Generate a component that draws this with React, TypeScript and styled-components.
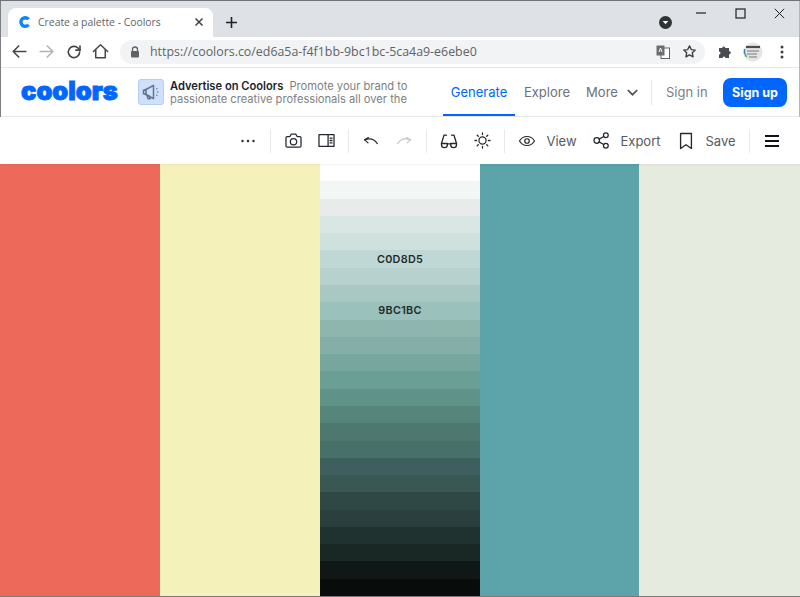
import React from "react";
import styled, { createGlobalStyle } from "styled-components";

const Global = createGlobalStyle`
  html, body { margin: 0; padding: 0; background: #fff; }
  * { box-sizing: border-box; }
`;

const Window = styled.div`
  width: 800px;
  height: 597px;
  display: flex;
  flex-direction: column;
  overflow: hidden;
  border-top: 1px solid #6f7276;
  border-bottom: 1px solid #77797a;
  font-family: Inter, "Noto Sans", sans-serif;
`;

const Framed = styled.div`
  border-left: 1px solid #7d7f82;
  border-right: 1px solid #b5b6b8;
  flex: none;
`;

const TabStrip = styled.div`
  height: 36px;
  background: #dee1e6;
  display: flex;
  align-items: flex-end;
  padding-left: 7px;
`;

const Tab = styled.div`
  width: 205px;
  height: 29px;
  background: #fff;
  border-radius: 8px 8px 0 0;
  display: flex;
  align-items: center;
  padding: 0 8px 1px 10px;
  gap: 6px;
`;

const TabTitle = styled.span`
  flex: 1;
  font: 10.4px "Open Sans", "Noto Sans", sans-serif;
  color: #5f6368;
  white-space: nowrap;
`;

const NewTab = styled.div`
  width: 36px;
  height: 29px;
  display: flex;
  align-items: center;
  justify-content: center;
  padding-bottom: 1px;
`;

const StripSpacer = styled.div`
  flex: 1;
`;

const ProfileDot = styled.div`
  width: 28px;
  height: 29px;
  display: flex;
  align-items: center;
  justify-content: center;
  padding-bottom: 1px;
`;

const WindowControls = styled.div`
  align-self: flex-start;
  display: flex;
  padding: 4px 0 0 0;
  margin-left: 3px;
`;

const WindowButton = styled.div`
  width: 39px;
  height: 16px;
  display: flex;
  align-items: center;
  justify-content: center;
`;

const BrowserBar = styled.div`
  height: 31px;
  background: #fff;
  display: flex;
  align-items: center;
  padding: 0 0 1px 5px;
  border-bottom: 1px solid #e4e6e8;
`;

const BrowserButton = styled.div<{ $w?: number }>`
  width: ${(p) => p.$w ?? 27}px;
  height: 24px;
  display: flex;
  align-items: center;
  justify-content: center;
  flex: none;
`;

const Omnibox = styled.div`
  width: 585px;
  height: 24px;
  margin-left: 6px;
  border-radius: 12px;
  background: #f1f3f4;
  display: flex;
  align-items: center;
  padding: 0 2px 0 10px;
  flex: none;
`;

const Url = styled.span`
  flex: 1;
  margin-left: 10px;
  font: 12.4px "Open Sans", "Noto Sans", sans-serif;
  color: #5f6368;
  white-space: nowrap;
`;

const ExtensionGroup = styled.div`
  display: flex;
  align-items: center;
  padding-left: 7px;
`;

const NavBar = styled.nav`
  height: 49px;
  display: flex;
  align-items: center;
  padding-left: 20px;
  background: #fff;
  border-bottom: 1px solid #e8e9eb;
`;

const Logo = styled.div`
  width: 117px;
  font-size: 25.5px;
  font-weight: 900;
  line-height: 30px;
  letter-spacing: 0;
  color: #0066ff;
  -webkit-text-stroke: 0.9px #0066ff;
  padding-bottom: 3px;
  flex: none;
`;

const AdIcon = styled.div`
  width: 26px;
  height: 26px;
  background: #cfe0fb;
  border: 1px solid #b4cdf5;
  border-radius: 3px;
  display: flex;
  align-items: center;
  justify-content: center;
  flex: none;
`;

const AdText = styled.div`
  width: 273px;
  margin-left: 6px;
  font-size: 11.15px;
  line-height: 13px;
  color: #7c7f85;
  white-space: nowrap;
  padding-top: 1px;
`;

const AdTitle = styled.strong`
  font-weight: 600;
  color: #20242b;
  margin-right: 3px;
`;

const NavLink = styled.a<{ $active?: boolean; $w: number }>`
  width: ${(p) => p.$w}px;
  height: 48px;
  flex: none;
  display: flex;
  align-items: center;
  justify-content: center;
  gap: 9px;
  font-size: 13px;
  color: ${(p) => (p.$active ? "#0066ff" : "#6c7078")};
  border-bottom: 2px solid ${(p) => (p.$active ? "#0066ff" : "transparent")};
  padding-top: 2px;
`;

const NavDivider = styled.div`
  width: 1px;
  height: 25px;
  background: #e6e7e9;
  margin: 0 14px 0 6px;
  flex: none;
`;

const SignIn = styled.a`
  font-size: 13px;
  color: #7c7f85;
  width: 41px;
  white-space: nowrap;
  flex: none;
`;

const SignUp = styled.button`
  width: 64px;
  height: 29px;
  margin-left: 16px;
  border: 0;
  border-radius: 8px;
  background: #0066ff;
  color: #fff;
  font: 700 12.5px Inter, sans-serif;
  padding: 0;
  flex: none;
`;

const ToolBar = styled.div`
  height: 47px;
  background: #fff;
  display: flex;
  align-items: center;
  justify-content: flex-end;
  padding-right: 11.5px;
  box-shadow: 0 1px 2px rgba(0, 0, 0, 0.06);
  position: relative;
`;

const ToolDivider = styled.div`
  width: 1px;
  height: 24px;
  background: #e8e9eb;
  margin: 0 5.5px;
  flex: none;
`;

const ToolButton = styled.div`
  width: 33px;
  height: 24px;
  display: flex;
  align-items: center;
  justify-content: center;
  flex: none;
`;

const ToolAction = styled.div<{ $w: number }>`
  width: ${(p) => p.$w}px;
  display: flex;
  align-items: center;
  flex: none;
`;

const ToolLabel = styled.span`
  font-size: 13px;
  color: #555a62;
  margin-left: 3px;
  white-space: nowrap;
`;

const Palette = styled.main`
  flex: 1;
  min-height: 0;
  display: grid;
  grid-template-columns: 160px 160px 160px 159px 161px;
`;

const Swatch = styled.section<{ $color: string }>`
  background: ${(p) => p.$color};
`;

const Shades = styled.section`
  display: flex;
  flex-direction: column;
`;

const Shade = styled.div<{ $color: string }>`
  flex: 1;
  min-height: 0;
  background: ${(p) => p.$color};
  display: flex;
  align-items: center;
  justify-content: center;
  font-size: 10.8px;
  font-weight: 600;
  letter-spacing: 0.3px;
  color: #1f2c2c;
`;

const shades: [string, string?][] = [
  ["#ffffff"], ["#f2f7f6"], ["#e7eceb"], ["#d9e6e4"], ["#cfe0dd"],
  ["#c0d8d5", "C0D8D5"], ["#b7d1ce"], ["#a9c8c4"], ["#9bc1bc", "9BC1BC"],
  ["#8fb5af"], ["#84aea7"], ["#76a69d"], ["#699f95"], ["#5f9389"],
  ["#56857c"], ["#4d776f"], ["#47706a"], ["#3f5f5e"], ["#3a5853"],
  ["#304845"], ["#2a3f3e"], ["#1f3230"], ["#1a2825"], ["#101716"], ["#080c0b"],
];

type IconProps = { size?: number; color?: string; width?: number; children: React.ReactNode };
const Icon = ({ size = 18, color = "#24292f", width = 1.6, children }: IconProps) => (
  <svg width={size} height={size} viewBox="0 0 24 24" fill="none" stroke={color} strokeWidth={width} strokeLinecap="round" strokeLinejoin="round">
    {children}
  </svg>
);

export default function App() {
  return (
    <>
      <Global />
      <Window>
        <Framed>
          <TabStrip>
            <Tab>
              <svg width="14" height="14" viewBox="0 0 14 14" fill="none">
                <path d="M10.6 4.3A4.3 4.3 0 1 0 10.6 9.7" stroke="#0a84ff" strokeWidth="3.4" />
              </svg>
              <TabTitle>Create a palette - Coolors</TabTitle>
              <svg width="12" height="12" viewBox="0 0 12 12" stroke="#3c4043" strokeWidth="1.5"><path d="M2.5 2.5l7 7M9.5 2.5l-7 7" /></svg>
            </Tab>
            <NewTab>
              <svg width="13" height="13" viewBox="0 0 13 13" stroke="#202124" strokeWidth="1.6"><path d="M6.5 1v11M1 6.5h11" /></svg>
            </NewTab>
            <StripSpacer />
            <ProfileDot>
              <svg width="13" height="13" viewBox="0 0 13 13"><circle cx="6.5" cy="6.5" r="6.5" fill="#303236" /><path d="M3.7 5h5.6L6.5 8.3z" fill="#fff" /></svg>
            </ProfileDot>
            <WindowControls>
              <WindowButton>
                <svg width="11" height="2" viewBox="0 0 11 2"><path d="M0 1h10" stroke="#202124" strokeWidth="1.2" /></svg>
              </WindowButton>
              <WindowButton>
                <svg width="11" height="11" viewBox="0 0 11 11" fill="none"><rect x="1" y="1" width="9" height="9" stroke="#202124" strokeWidth="1.2" /></svg>
              </WindowButton>
              <WindowButton>
                <svg width="11" height="11" viewBox="0 0 11 11" stroke="#202124" strokeWidth="1"><path d="M.8.8l9.4 9.4M10.2.8L.8 10.2" /></svg>
              </WindowButton>
            </WindowControls>
          </TabStrip>
          <BrowserBar>
            <BrowserButton>
              <Icon size={19} color="#44474a" width={2}><path d="M20 12H4M11 5l-7 7 7 7" /></Icon>
            </BrowserButton>
            <BrowserButton>
              <Icon size={19} color="#b1b3b6" width={2}><path d="M4 12h16M13 5l7 7-7 7" /></Icon>
            </BrowserButton>
            <BrowserButton>
              <Icon size={18} color="#44474a" width={2.2}><path d="M19.5 12a7.5 7.5 0 1 1-2.2-5.3L20 9.5" /><path d="M20 4v5.5h-5.5" /></Icon>
            </BrowserButton>
            <BrowserButton>
              <Icon size={19} color="#44474a" width={1.9}><path d="M3 12l9-8.5 9 8.5" /><path d="M6 10v10h12V10" /></Icon>
            </BrowserButton>
            <Omnibox>
              <svg width="10" height="12" viewBox="0 0 10 12"><path d="M2.5 5V3.5a2.5 2.5 0 0 1 5 0V5" fill="none" stroke="#5f6368" strokeWidth="1.3" /><rect x="1" y="5" width="8" height="6.5" rx="1" fill="#5f6368" /></svg>
              <Url>https://coolors.co/ed6a5a-f4f1bb-9bc1bc-5ca4a9-e6ebe0</Url>
              <BrowserButton>
                <svg width="14" height="14" viewBox="0 0 14 14"><rect x="5" y="3" width="8.5" height="10.5" fill="#fff" stroke="#5f6368" /><rect x=".5" y=".5" width="8" height="10" fill="#6a6d70" /><path d="M3 7l1.5-4L6 7" stroke="#fff" fill="none" /></svg>
              </BrowserButton>
              <BrowserButton>
                <Icon size={15} color="#3c4043" width={2.2}><path d="M12 3l2.8 5.9 6.4.8-4.7 4.4 1.2 6.4L12 17.4l-5.7 3.1 1.2-6.4L2.800 9.700l6.400-.8z" /></Icon>
              </BrowserButton>
            </Omnibox>
            <ExtensionGroup>
              <BrowserButton>
                <svg width="15" height="15" viewBox="0 0 15 15"><path d="M1 4h3.200a1.500 1.500 0 1 1 3 0H11v3a1.500 1.500 0 1 1 0 3.500V14H7.500a1.500 1.500 0 1 0-3 0H1v-3.500a1.500 1.500 0 1 0 0-3z" fill="#494c50" /></svg>
              </BrowserButton>
              <BrowserButton>
                <svg width="20" height="20" viewBox="0 0 20 20">
                  <circle cx="10" cy="10" r="9.500" fill="#e4e5e6" />
                  <path d="M3 5h14" stroke="#4a4d50" strokeWidth="2.200" />
                  <path d="M4 9h12M4 12h10M6 15h8" stroke="#777" strokeWidth="1" />
                  <path d="M1.500 7v5" stroke="#3a7bd5" strokeWidth="1.500" />
                  <path d="M2 12l1.500 3" stroke="#3aa655" strokeWidth="1.500" />
                </svg>
              </BrowserButton>
              <BrowserButton $w={31}>
                <svg width="4" height="14" viewBox="0 0 4 14" fill="#3c4043"><circle cx="2" cy="2" r="1.500" /><circle cx="2" cy="7" r="1.500" /><circle cx="2" cy="12" r="1.500" /></svg>
              </BrowserButton>
            </ExtensionGroup>
          </BrowserBar>
          <NavBar>
            <Logo>coolors</Logo>
            <AdIcon>
              <Icon size={20} color="#5f7392" width={1.800}>
                <path d="M3 10v4l3 1V9z" /><path d="M6 9l9-5v16l-9-5" /><path d="M7 15.500l1.500 4.500h2.500l-1.200-3.500" /><path d="M19 8v.01M20 12v.01M19 16v.01" />
              </Icon>
            </AdIcon>
            <AdText>
              <AdTitle>Advertise on Coolors</AdTitle> Promote your brand to<br />passionate creative professionals all over the
            </AdText>
            <NavLink $active $w={72}>Generate</NavLink>
            <NavLink $w={64}>Explore</NavLink>
            <NavLink $w={66}>
              More
              <svg width="11" height="7" viewBox="0 0 11 7" fill="none" stroke="#4d5157" strokeWidth="1.700"><path d="M.8 1l4.700 4.700L10.200 1" /></svg>
            </NavLink>
            <NavDivider />
            <SignIn>Sign in</SignIn>
            <SignUp>Sign up</SignUp>
          </NavBar>
        </Framed>
        <ToolBar>
          <ToolButton>
            <svg width="16" height="4" viewBox="0 0 16 4" fill="#24292f"><circle cx="2.500" cy="2" r="1.200" /><circle cx="8" cy="2" r="1.200" /><circle cx="13.500" cy="2" r="1.200" /></svg>
          </ToolButton>
          <ToolDivider />
          <ToolButton>
            <Icon size={19}><path d="M4 7h3.500L9 4h6l1.500 3H20a1.500 1.500 0 0 1 1.500 1.500V19a1.500 1.500 0 0 1-1.500 1.500H4A1.500 1.500 0 0 1 2.500 19V8.500A1.500 1.500 0 0 1 4 7z" /><circle cx="12" cy="13.500" r="4" /></Icon>
          </ToolButton>
          <ToolButton>
            <Icon size={19}><rect x="2.500" y="4.500" width="19" height="15" /><path d="M14 4.500v15" /><path d="M16.500 9h2.500M16.500 12h2.500M16.500 15h2.500" /></Icon>
          </ToolButton>
          <ToolDivider />
          <ToolButton>
            <Icon size={18}><path d="M3.500 10.500l5-3M3.500 10.500l4.500 4" /><path d="M3.500 10.500c5-2 12-2 17 5" /></Icon>
          </ToolButton>
          <ToolButton>
            <Icon size={18} color="#c4c6c9"><path d="M20.500 10.500l-5-3M20.500 10.500l-4.500 4" /><path d="M20.500 10.500c-5-2-12-2-17 5" /></Icon>
          </ToolButton>
          <ToolDivider />
          <ToolButton>
            <Icon size={20}><path d="M3 15l3-10h3M21 15l-3-10h-3" /><path d="M10 16.500a3.500 3.500 0 1 1-7 0V15h7zM21 16.500a3.500 3.500 0 1 1-7 0V15h7z" /><path d="M10 15.500h4" /></Icon>
          </ToolButton>
          <ToolButton>
            <Icon size={19}><circle cx="12" cy="12" r="4.500" /><path d="M12 2.500v2M12 19.500v2M2.500 12h2M19.500 12h2M5.300 5.300l1.400 1.400M17.300 17.300l1.400 1.400M5.300 18.700l1.400-1.400M17.300 6.700l1.400-1.400" /></Icon>
          </ToolButton>
          <ToolDivider />
          <ToolAction $w={74}>
            <ToolButton>
              <Icon size={18}><path d="M2 12s3.500-6 10-6 10 6 10 6-3.500 6-10 6-10-6-10-6z" /><circle cx="12" cy="12" r="3" /></Icon>
            </ToolButton>
            <ToolLabel>View</ToolLabel>
          </ToolAction>
          <ToolAction $w={85}>
            <ToolButton>
              <Icon size={19}><circle cx="6" cy="12" r="3.500" /><circle cx="17.500" cy="5.500" r="3" /><circle cx="17.500" cy="18.500" r="3" /><path d="M9 10.300l5.800-3.300M9 13.700l5.800 3.300" /></Icon>
            </ToolButton>
            <ToolLabel>Export</ToolLabel>
          </ToolAction>
          <ToolAction $w={74}>
            <ToolButton>
              <Icon size={20}><path d="M5.500 3h13v18L12 16.500 5.500 21z" /></Icon>
            </ToolButton>
            <ToolLabel>Save</ToolLabel>
          </ToolAction>
          <ToolDivider />
          <ToolButton>
            <svg width="14" height="12" viewBox="0 0 14 12" stroke="#101418" strokeWidth="1.800"><path d="M0 1h14M0 6h14M0 11h14" /></svg>
          </ToolButton>
        </ToolBar>
        <Palette>
          <Swatch $color="#ed6a5a" />
          <Swatch $color="#f4f1bb" />
          <Shades>
            {shades.map(([color, label]) => (
              <Shade key={color} $color={color}>{label}</Shade>
            ))}
          </Shades>
          <Swatch $color="#5ca4a9" />
          <Swatch $color="#e6ebe0" />
        </Palette>
      </Window>
    </>
  );
}
